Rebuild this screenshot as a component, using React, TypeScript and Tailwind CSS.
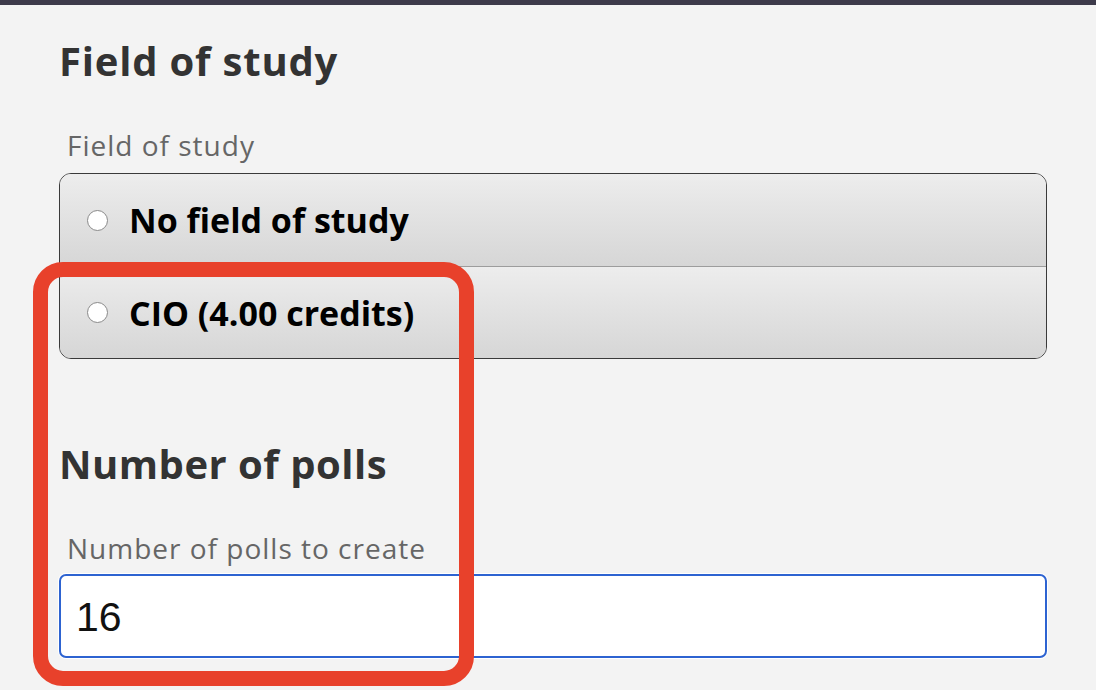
import React from 'react'

const options = ['No field of study', 'CIO (4.00 credits)']

const Radio = () => (
  <span className="block w-[21px] h-[21px] rounded-full border-[1.5px] border-[#8a8a8a] bg-white shrink-0" />
)

export default function App() {
  return (
    <div className="relative w-[1096px] h-[690px] overflow-hidden bg-[#f3f3f3] font-['Open_Sans',sans-serif]">
      <div className="h-[5px] bg-[#3d3a4a]" />

      <div className="pl-[59px] w-[1047px]">
        {/* Field of study */}
        <h2 className="mt-[36px] text-[40px] leading-none font-bold tracking-[0.8px] text-[#333333]">Field of study</h2>
        <div className="mt-[50px] pl-[8px] text-[28px] leading-none tracking-[1px] text-[#666666]">Field of study</div>

        <div className="mt-[14px] rounded-[12px] border border-[#3a3a3a] overflow-hidden">
          {options.map((opt, i) => (
            <label
              key={opt}
              className={
                'flex items-center h-[92px] pl-[27px] gap-[21px] bg-gradient-to-b from-[#ededed] to-[#d6d6d6] ' +
                (i > 0 ? 'border-t border-[#9c9c9c]' : '')
              }
            >
              <Radio />
              <span className="text-[34px] leading-none font-bold text-black">{opt}</span>
            </label>
          ))}
        </div>

        {/* Number of polls */}
        <h2 className="mt-[85px] text-[40px] leading-none font-bold tracking-[0.5px] text-[#333333]">Number of polls</h2>
        <div className="mt-[50px] pl-[8px] text-[28px] leading-none tracking-[1px] text-[#666666]">Number of polls to create</div>
        <div className="mt-[12px] h-[84px] rounded-[7px] border-2 border-[#2d63d1] bg-white flex items-center pl-[15px] pt-[2px] shadow-[0_0_0_1px_#ffffff]">
          <span className="text-[41px] leading-none text-[#111111] font-['Liberation_Sans',Arial,sans-serif]">16</span>
        </div>
      </div>

      {/* annotation */}
      <div className="absolute left-[33px] top-[262px] w-[441px] h-[424px] rounded-[30px] border-[15px] border-[#e8412b] pointer-events-none" />
    </div>
  )
}
